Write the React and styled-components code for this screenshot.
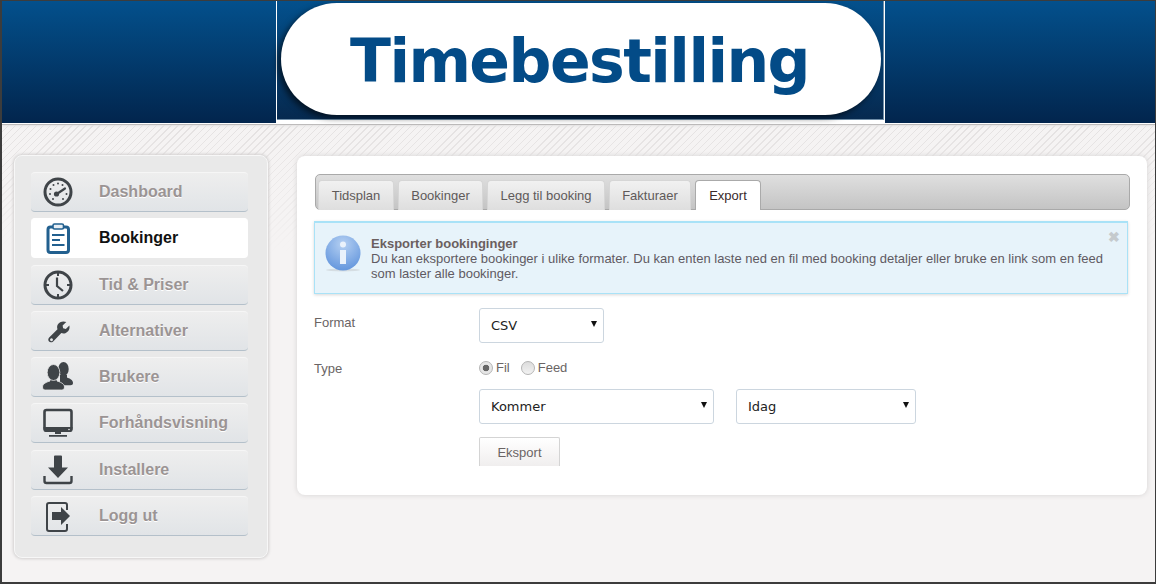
import React from 'react';
import styled, { createGlobalStyle } from 'styled-components';

const GlobalStyle = createGlobalStyle`
  html, body { margin: 0; padding: 0; background: #f5f3f3; }
  * { box-sizing: border-box; }
`;

const Frame = styled.div`
  width: 1156px;
  height: 584px;
  overflow: hidden;
  border: 1px solid #3c3c3c;
  border-width: 1px 1px 2px 2px;
  background:
    linear-gradient(rgba(245, 243, 243, 0) 0, #f5f3f3 130px),
    repeating-linear-gradient(135deg, #e4e1e1 0, #e4e1e1 1px, #f5f3f3 1px, #f5f3f3 5px);
  background-position: 0 123px;
  background-repeat: no-repeat;
  background-color: #f5f3f3;
  font-family: 'Liberation Sans', Arial, sans-serif;
`;

const Header = styled.header`
  height: 122px;
  display: flex;
  justify-content: center;
  padding-left: 3px;
  background: linear-gradient(#03508c, #02254d);
  box-shadow: 0 1px 0 #fff, 0 2px 0 #bdbbbb, 0 3px 2px #e4e2e2;
`;

const LogoBox = styled.div`
  width: 609px;
  height: 122px;
  padding: 2px 3px 0 4px;
  border: 1px solid #fff;
  border-top: 0;
  border-bottom-width: 3px;
  background: linear-gradient(#03508c, #06294f);
  box-shadow: inset 0 -1px 0 #6f8ea8, inset -1px 0 0 #6f8ea8;
`;

const LogoPill = styled.div`
  height: 112px;
  border-radius: 56px;
  background: #fff;
  box-shadow: -3px 3px 6px rgba(0, 0, 0, 0.6);
  display: flex;
  align-items: center;
  justify-content: center;
  padding: 3px 2px 0 0;
  color: #034b87;
  font: bold 60px 'DejaVu Sans', Verdana, sans-serif;
  letter-spacing: -1.55px;
`;

const Body = styled.div`
  display: flex;
  align-items: flex-start;
  gap: 29px;
  padding: 32px 8px 0 12px;
`;

const Sidebar = styled.nav`
  width: 254px;
  height: 403px;
  flex: none;
  padding: 16px 19px 0 16px;
  display: flex;
  flex-direction: column;
  gap: 6.3px;
  background: #e9e9e9;
  border: 1px solid #f7f7f7;
  border-radius: 8px;
  box-shadow: 0 0 3px 1px #d2d0d0;
`;

const NavItem = styled.a`
  height: 40px;
  flex: none;
  display: flex;
  align-items: center;
  border-radius: 4px;
  font-size: 16px;
  font-weight: bold;
  padding-bottom: ${({ $active }) => ($active ? '1px' : '0')};
  color: ${({ $active }) => ($active ? '#111' : '#9b9494')};
  text-shadow: ${({ $active }) => ($active ? 'none' : '0 1px 0 #fff')};
  background: ${({ $active }) => ($active ? '#fff' : 'linear-gradient(#eeeeee, #e1e4e7)')};
  border-top: 1px solid ${({ $active }) => ($active ? '#fff' : '#f6f6f6')};
  border-bottom: ${({ $active }) => ($active ? '0' : '1px solid #b4c0ca')};
`;

const NavIcon = styled.svg`
  width: 32px;
  height: 32px;
  margin: 0 25px 0 11px;
  flex: none;
`;

const Card = styled.main`
  width: 850px;
  height: 339px;
  margin-top: 1px;
  padding: 18px 17px 0 17px;
  background: #fff;
  border-radius: 8px;
  box-shadow: 0 0 4px 1px #dedcdc;
`;

const TabBar = styled.div`
  height: 36px;
  width: 815px;
  margin-left: 1px;
  padding: 5px 2px 0;
  display: flex;
  gap: 4px;
  background: linear-gradient(#dfdfdf, #c4c4c4);
  border: 1px solid #a9a9a9;
  border-radius: 5px;
`;

const Tab = styled.div`
  height: 30px;
  width: ${({ $w }) => $w}px;
  display: flex;
  align-items: center;
  justify-content: center;
  font-size: 13px;
  color: ${({ $active }) => ($active ? '#3a2a2a' : '#5f5a5a')};
  background: ${({ $active }) => ($active ? '#fff' : 'linear-gradient(#f1f1f1, #dedede)')};
  border: 1px solid ${({ $active }) => ($active ? '#aaa' : '#d6d6d6')};
  border-bottom: 0;
  border-radius: 4px 4px 0 0;
`;

const Alert = styled.div`
  position: relative;
  width: 814px;
  height: 73px;
  margin-top: 11px;
  padding: 13px 16px 0 56px;
  background: #e7f3fa;
  border: 1px solid #a9e2f7;
  border-top-width: 2px;
  box-shadow: 0 1px 3px #d8d8d8;
  font-size: 13px;
  line-height: 15px;
  color: #5f5a62;
`;

const AlertTitle = styled.div`
  font-weight: bold;
  color: #6b5f5f;
`;

const AlertIcon = styled.svg`
  position: absolute;
  left: 10px;
  top: 12px;
  width: 36px;
  height: 38px;
`;

const Close = styled.span`
  position: absolute;
  right: 7px;
  top: 7px;
  color: #c5cacd;
  font-size: 14px;
  font-weight: bold;
`;

const FormGrid = styled.div`
  display: grid;
  grid-template-columns: 165px 1fr;
  font-size: 13px;
  color: #6a6464;
  margin-top: 14px;
`;

const FieldLabel = styled.div`
  padding-top: ${({ $top }) => $top}px;
`;

const Field = styled.div`
  display: flex;
  align-items: center;
  gap: ${({ $gap }) => $gap || 0}px;
  margin-top: ${({ $mt }) => $mt || 0}px;
`;

const SelectBox = styled.div`
  position: relative;
  width: ${({ $w }) => $w}px;
  height: 35px;
  padding-left: 11px;
  display: flex;
  align-items: center;
  background: #fff;
  border: 1px solid #ccd6df;
  border-radius: 3px;
  font: 13px 'DejaVu Sans', Verdana, sans-serif;
  color: #222;
  &::after {
    content: '';
    position: absolute;
    right: 6px;
    top: 12px;
    border: 3.5px solid transparent;
    border-top: 6px solid #111;
    border-bottom: 0;
  }
`;

const RadioLabel = styled.label`
  display: inline-flex;
  align-items: center;
  gap: 3px;
`;

const Radio = styled.span`
  width: 14px;
  height: 14px;
  border-radius: 50%;
  border: 1px solid #b5b5b5;
  background: ${({ $on }) => ($on ? 'radial-gradient(circle, #666 0, #666 3px, #e6e6e6 3.6px)' : 'linear-gradient(#dcdcdc, #f2f2f2)')};
`;

const ExportButton = styled.button`
  width: 81px;
  height: 29px;
  padding: 0;
  background: linear-gradient(#fff, #f0eeee);
  border: 1px solid #d4d4d4;
  border-bottom: 0;
  border-radius: 2px 2px 0 0;
  font: 13px 'Liberation Sans', Arial, sans-serif;
  color: #6a6464;
`;

const dark = '#3f4448';

const icons = {
  gauge: (
    <>
      <circle cx="16" cy="16" r="13" fill="none" stroke={dark} strokeWidth="3" />
      <g fill={dark}>
        <circle cx="8" cy="18" r="1" /><circle cx="8.5" cy="13" r="1" /><circle cx="11.5" cy="9" r="1" />
        <circle cx="16" cy="7.5" r="1" /><circle cx="20.5" cy="9" r="1" /><circle cx="24.5" cy="18" r="1" />
        <circle cx="11" cy="23" r="1" /><circle cx="21" cy="23" r="1" />
      </g>
      <path d="M14 18.5 L23 12.5" stroke={dark} strokeWidth="2.2" strokeLinecap="round" />
      <circle cx="14.5" cy="18" r="2.6" fill={dark} />
    </>
  ),
  clipboard: (
    <>
      <rect x="6" y="5" width="20.5" height="25.5" rx="2.5" fill="none" stroke="#22608f" strokeWidth="3" />
      <rect x="11" y="2" width="10.5" height="5" rx="1.5" fill="#e7eef4" stroke="#22608f" strokeWidth="1.6" />
      <path d="M10 13h12.5M10 18h8M10 23h12.5" stroke="#22608f" strokeWidth="2.2" />
    </>
  ),
  clock: (
    <>
      <circle cx="16" cy="16" r="13" fill="none" stroke={dark} strokeWidth="3" />
      <path d="M16 3v4M16 25v4M3 16h4M25 16h4" stroke={dark} strokeWidth="2" />
      <path d="M15 8.5V17l6 5" fill="none" stroke={dark} strokeWidth="2.2" />
    </>
  ),
  wrench: (
    <g transform="translate(3.5 3.5) scale(.8)">
      <path
        fill={dark}
        d="M26 4.5 l-4.6 4.4 .6 3.4 3.4 .8 4.4-4.2 c1 4-.8 8-5 9.4 -2 .6-3.6 .4-5-.2 L9.6 28.6 c-1.6 1.6-4 1.6-5.2 .2 -1.4-1.4-1.2-3.6 .2-5 L15 13.4 c-.8-2-.6-4 .4-5.8 2-3.4 6.6-4.8 10.6-3.1 z M7.5 24.8 a1.8 1.8 0 1 0 .01 0 z"
        fillRule="evenodd"
      />
    </g>
  ),
  users: (
    <g fill={dark}>
      <ellipse cx="21.5" cy="8" rx="5.2" ry="7" />
      <path d="M18 14h7v2.500c2.500 1 6 2.200 6 5.500 0 1.500-1 2.200-2.500 2.200H18z" />
      <path d="M8 17h7v3c3 1 7.500 2.500 7.500 6 0 2-1.200 3-3 3H3.500c-1.800 0-3-1-3-3 0-3.500 4.500-5 7.500-6z" stroke="#e9e9e9" strokeWidth=".8" />
      <ellipse cx="11.5" cy="11.500" rx="6.300" ry="8" stroke="#e9e9e9" strokeWidth=".8" />
    </g>
  ),
  monitor: (
    <>
      <rect x="2.5" y="3" width="27" height="20" rx="2" fill="none" stroke={dark} strokeWidth="2.6" />
      <path d="M1.5 20h29v3a2 2 0 0 1-2 2h-25a2 2 0 0 1-2-2z" fill={dark} />
      <path d="M13 25h6v2h-6zM7 28h18v1.800H7z" fill={dark} />
      <circle cx="27" cy="22.5" r=".8" fill="#eee" />
    </>
  ),
  download: (
    <>
      <path d="M12 2.5a1 1 0 0 1 1-1h6a1 1 0 0 1 1 1v11h6L16 24 6 13.5h6z" fill={dark} />
      <path d="M2.5 22v5a2 2 0 0 0 2 2h23a2 2 0 0 0 2-2v-5" fill="none" stroke={dark} strokeWidth="2.4" />
    </>
  ),
  logout: (
    <>
      <path d="M25 10V5a2 2 0 0 0-2-2H7a2 2 0 0 0-2 2v24a2 2 0 0 0 2 2h16a2 2 0 0 0 2-2v-5" fill="none" stroke={dark} strokeWidth="2" />
      <path d="M10 13h9V8l9 9-9 9v-5h-9z" fill={dark} transform="translate(0 -1)" />
    </>
  ),
};

const navItems = [
  ['gauge', 'Dashboard'],
  ['clipboard', 'Bookinger', true],
  ['clock', 'Tid & Priser'],
  ['wrench', 'Alternativer'],
  ['users', 'Brukere'],
  ['monitor', 'Forhåndsvisning'],
  ['download', 'Installere'],
  ['logout', 'Logg ut'],
];

const tabs = [
  ['Tidsplan', 76],
  ['Bookinger', 85],
  ['Legg til booking', 118],
  ['Fakturaer', 82],
  ['Export', 66, true],
];

const App = () => (
  <Frame>
    <GlobalStyle />
    <Header>
      <LogoBox>
        <LogoPill>Timebestilling</LogoPill>
      </LogoBox>
    </Header>
    <Body>
      <Sidebar>
        {navItems.map(([icon, label, active]) => (
          <NavItem key={label} $active={active}>
            <NavIcon viewBox="0 0 32 32">{icons[icon]}</NavIcon>
            {label}
          </NavItem>
        ))}
      </Sidebar>
      <Card>
        <TabBar>
          {tabs.map(([label, w, active]) => (
            <Tab key={label} $w={w} $active={active}>{label}</Tab>
          ))}
        </TabBar>
        <Alert>
          <AlertIcon viewBox="0 0 36 38">
            <defs>
              <radialGradient id="infoBlue" cx="50%" cy="25%" r="80%">
                <stop offset="0" stopColor="#b5d0f2" />
                <stop offset="1" stopColor="#5f93dc" />
              </radialGradient>
            </defs>
            <ellipse cx="18" cy="35" rx="17" ry="1.5" fill="#d5dde2" />
            <circle cx="18" cy="18" r="17.5" fill="url(#infoBlue)" />
            <circle cx="18" cy="9.5" r="3" fill="#eaf2fb" />
            <rect x="15" y="15" width="6" height="14" fill="#eaf2fb" />
          </AlertIcon>
          <AlertTitle>Eksporter bookinginger</AlertTitle>
          Du kan eksportere bookinger i ulike formater. Du kan enten laste ned en fil med booking detaljer eller bruke en link som en feed som laster alle bookinger.
          <Close>✖</Close>
        </Alert>
        <FormGrid>
          <FieldLabel $top={7}>Format</FieldLabel>
          <Field><SelectBox $w={125}>CSV</SelectBox></Field>
          <FieldLabel $top={18}>Type</FieldLabel>
          <Field $mt={16} $gap={11}>
            <RadioLabel><Radio $on />Fil</RadioLabel>
            <RadioLabel><Radio />Feed</RadioLabel>
          </Field>
          <div />
          <Field $mt={13} $gap={22}>
            <SelectBox $w={235}>Kommer</SelectBox>
            <SelectBox $w={180}>Idag</SelectBox>
          </Field>
          <div />
          <Field $mt={13}><ExportButton>Eksport</ExportButton></Field>
        </FormGrid>
      </Card>
    </Body>
  </Frame>
);

export default App;
